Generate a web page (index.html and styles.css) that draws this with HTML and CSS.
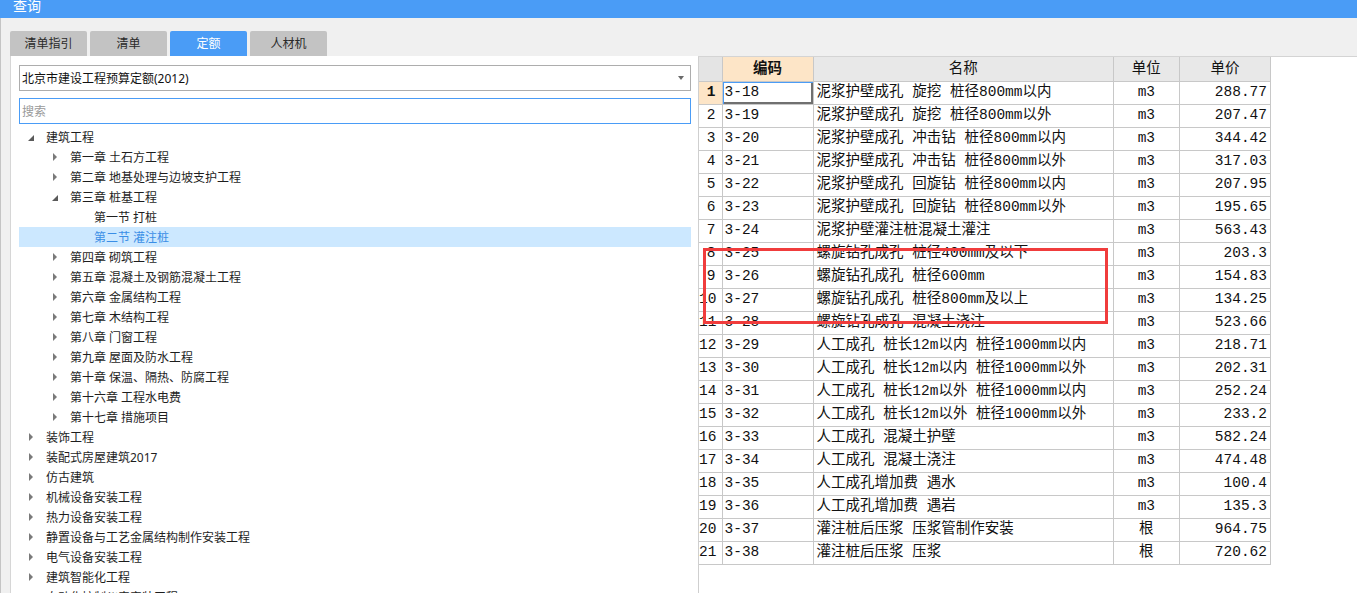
FILE: index.html
```html
<!DOCTYPE html>
<html lang="zh-CN">
<head>
<meta charset="utf-8">
<title>查询</title>
<link rel="stylesheet" href="styles.css">
</head>
<body>
<div class="app">
  <div class="titlebar"><span class="title">查询</span></div>
  <div class="frame">
    <div class="tabs">
      <div class="tab">清单指引</div>
      <div class="tab">清单</div>
      <div class="tab active">定额</div>
      <div class="tab">人材机</div>
    </div>
    <div class="main">
      <div class="left">
        <div class="combo"><span>北京市建设工程预算定额(2012)</span><i class="combo-arrow"></i></div>
        <input class="search" type="text" placeholder="搜索">
        <ul class="tree">
          <li class="node l0"><i class="tw open"></i><span>建筑工程</span></li>
          <li class="node l1"><i class="tw closed"></i><span>第一章 土石方工程</span></li>
          <li class="node l1"><i class="tw closed"></i><span>第二章 地基处理与边坡支护工程</span></li>
          <li class="node l1"><i class="tw open"></i><span>第三章 桩基工程</span></li>
          <li class="node l2"><i class="tw"></i><span>第一节 打桩</span></li>
          <li class="node l2 selected"><i class="tw"></i><span>第二节 灌注桩</span></li>
          <li class="node l1"><i class="tw closed"></i><span>第四章 砌筑工程</span></li>
          <li class="node l1"><i class="tw closed"></i><span>第五章 混凝土及钢筋混凝土工程</span></li>
          <li class="node l1"><i class="tw closed"></i><span>第六章 金属结构工程</span></li>
          <li class="node l1"><i class="tw closed"></i><span>第七章 木结构工程</span></li>
          <li class="node l1"><i class="tw closed"></i><span>第八章 门窗工程</span></li>
          <li class="node l1"><i class="tw closed"></i><span>第九章 屋面及防水工程</span></li>
          <li class="node l1"><i class="tw closed"></i><span>第十章 保温、隔热、防腐工程</span></li>
          <li class="node l1"><i class="tw closed"></i><span>第十六章 工程水电费</span></li>
          <li class="node l1"><i class="tw closed"></i><span>第十七章 措施项目</span></li>
          <li class="node l0"><i class="tw closed"></i><span>装饰工程</span></li>
          <li class="node l0"><i class="tw closed"></i><span>装配式房屋建筑2017</span></li>
          <li class="node l0"><i class="tw closed"></i><span>仿古建筑</span></li>
          <li class="node l0"><i class="tw closed"></i><span>机械设备安装工程</span></li>
          <li class="node l0"><i class="tw closed"></i><span>热力设备安装工程</span></li>
          <li class="node l0"><i class="tw closed"></i><span>静置设备与工艺金属结构制作安装工程</span></li>
          <li class="node l0"><i class="tw closed"></i><span>电气设备安装工程</span></li>
          <li class="node l0"><i class="tw closed"></i><span>建筑智能化工程</span></li>
          <li class="node l0"><i class="tw closed"></i><span>自动化控制仪表安装工程</span></li>
        </ul>
      </div>
      <div class="right">
        <table class="grid">
          <colgroup>
            <col class="c-no"><col class="c-code"><col class="c-name"><col class="c-unit"><col class="c-price">
          </colgroup>
          <thead>
            <tr class="head"><th class="corner"></th><th class="hl">编码</th><th>名称</th><th>单位</th><th>单价</th></tr>
          </thead>
          <tbody>
            <tr><td class="no cur">1</td><td class="code focus">3-18</td><td class="name">泥浆护壁成孔 旋挖 桩径800mm以内</td><td class="unit">m3</td><td class="price">288.77</td></tr>
            <tr><td class="no">2</td><td class="code">3-19</td><td class="name">泥浆护壁成孔 旋挖 桩径800mm以外</td><td class="unit">m3</td><td class="price">207.47</td></tr>
            <tr><td class="no">3</td><td class="code">3-20</td><td class="name">泥浆护壁成孔 冲击钻 桩径800mm以内</td><td class="unit">m3</td><td class="price">344.42</td></tr>
            <tr><td class="no">4</td><td class="code">3-21</td><td class="name">泥浆护壁成孔 冲击钻 桩径800mm以外</td><td class="unit">m3</td><td class="price">317.03</td></tr>
            <tr><td class="no">5</td><td class="code">3-22</td><td class="name">泥浆护壁成孔 回旋钻 桩径800mm以内</td><td class="unit">m3</td><td class="price">207.95</td></tr>
            <tr><td class="no">6</td><td class="code">3-23</td><td class="name">泥浆护壁成孔 回旋钻 桩径800mm以外</td><td class="unit">m3</td><td class="price">195.65</td></tr>
            <tr><td class="no">7</td><td class="code">3-24</td><td class="name">泥浆护壁灌注桩混凝土灌注</td><td class="unit">m3</td><td class="price">563.43</td></tr>
            <tr><td class="no">8</td><td class="code">3-25</td><td class="name">螺旋钻孔成孔 桩径400mm及以下</td><td class="unit">m3</td><td class="price">203.3</td></tr>
            <tr><td class="no">9</td><td class="code">3-26</td><td class="name">螺旋钻孔成孔 桩径600mm</td><td class="unit">m3</td><td class="price">154.83</td></tr>
            <tr><td class="no">10</td><td class="code">3-27</td><td class="name">螺旋钻孔成孔 桩径800mm及以上</td><td class="unit">m3</td><td class="price">134.25</td></tr>
            <tr><td class="no">11</td><td class="code">3-28</td><td class="name">螺旋钻孔成孔 混凝土浇注</td><td class="unit">m3</td><td class="price">523.66</td></tr>
            <tr><td class="no">12</td><td class="code">3-29</td><td class="name">人工成孔 桩长12m以内 桩径1000mm以内</td><td class="unit">m3</td><td class="price">218.71</td></tr>
            <tr><td class="no">13</td><td class="code">3-30</td><td class="name">人工成孔 桩长12m以内 桩径1000mm以外</td><td class="unit">m3</td><td class="price">202.31</td></tr>
            <tr><td class="no">14</td><td class="code">3-31</td><td class="name">人工成孔 桩长12m以外 桩径1000mm以内</td><td class="unit">m3</td><td class="price">252.24</td></tr>
            <tr><td class="no">15</td><td class="code">3-32</td><td class="name">人工成孔 桩长12m以外 桩径1000mm以外</td><td class="unit">m3</td><td class="price">233.2</td></tr>
            <tr><td class="no">16</td><td class="code">3-33</td><td class="name">人工成孔 混凝土护壁</td><td class="unit">m3</td><td class="price">582.24</td></tr>
            <tr><td class="no">17</td><td class="code">3-34</td><td class="name">人工成孔 混凝土浇注</td><td class="unit">m3</td><td class="price">474.48</td></tr>
            <tr><td class="no">18</td><td class="code">3-35</td><td class="name">人工成孔增加费 遇水</td><td class="unit">m3</td><td class="price">100.4</td></tr>
            <tr><td class="no">19</td><td class="code">3-36</td><td class="name">人工成孔增加费 遇岩</td><td class="unit">m3</td><td class="price">135.3</td></tr>
            <tr><td class="no">20</td><td class="code">3-37</td><td class="name">灌注桩后压浆 压浆管制作安装</td><td class="unit">根</td><td class="price">964.75</td></tr>
            <tr><td class="no">21</td><td class="code">3-38</td><td class="name">灌注桩后压浆 压浆</td><td class="unit">根</td><td class="price">720.62</td></tr>
          </tbody>
        </table>
        <div class="mark"></div>
      </div>
    </div>
  </div>
</div>
</body>
</html>
```
FILE: styles.css
```css
* { box-sizing: border-box; }
html, body { margin: 0; padding: 0; }
body {
  width: 1357px;
  height: 593px;
  overflow: hidden;
  background: #f0f0f0;
  font-family: "Noto Sans", "Noto Sans CJK SC", sans-serif;
  color: #1e1e1e;
}
.app { display: flex; flex-direction: column; height: 593px; }

.titlebar {
  height: 18px;
  background: #4a9cf6;
  padding-left: 13px;
  overflow: hidden;
}
.title {
  display: block;
  color: #fff;
  font-size: 14px;
  line-height: 12px;
}

.frame {
  flex: 1;
  display: flex;
  flex-direction: column;
  border-left: 1px solid #c4c4c4;
  min-height: 0;
}

.tabs {
  display: flex;
  gap: 3px;
  padding: 13px 0 0 9px;
  height: 38px;
}
.tab {
  width: 77px;
  height: 25px;
  background: #c3c3c3;
  border-radius: 2px 2px 0 0;
  font-size: 12px;
  line-height: 25px;
  text-align: center;
  color: #2a2a2a;
}
.tab.active { background: #4a9cf6; color: #fff; }

.main {
  flex: 1;
  display: flex;
  margin-left: 9px;
  min-height: 0;
}

.left {
  width: 688px;
  background: #fff;
  border-left: 1px solid #d6d6d6;
  padding: 9px 7px 0 8px;
  overflow: hidden;
}
.combo {
  height: 26px;
  border: 1px solid #adadad;
  display: flex;
  align-items: center;
  justify-content: space-between;
  padding: 0 6px 0 2px;
  font-size: 12px;
  color: #111;
}
.combo-arrow {
  width: 0; height: 0;
  border-left: 3.5px solid transparent;
  border-right: 3.5px solid transparent;
  border-top: 4px solid #6a6a6a;
}
.search {
  display: block;
  width: 100%;
  height: 26px;
  margin: 7px 0 0;
  border: 1px solid #4a9cf6;
  outline: none;
  padding: 0 2px;
  font-family: "Noto Sans", "Noto Sans CJK SC", sans-serif;
  font-size: 12px;
  color: #222;
  background: #fff;
}
.search::placeholder { color: #9a9a9a; }

.tree {
  list-style: none;
  margin: 3px 0 0;
  padding: 0;
}
.node {
  height: 20px;
  display: flex;
  align-items: center;
  font-size: 12px;
  color: #1e1e1e;
  white-space: nowrap;
}
.node.l0 { padding-left: 9px; }
.node.l1 { padding-left: 33px; }
.node.l2 { padding-left: 57px; }
.node.selected { background: #cce8ff; color: #3a8ee6; }
.tw {
  width: 18px;
  height: 20px;
  flex: none;
  position: relative;
}
.tw.closed::before {
  content: "";
  position: absolute;
  left: 1px; top: 6px;
  border-left: 4px solid #7a7a7a;
  border-top: 4px solid transparent;
  border-bottom: 4px solid transparent;
}
.tw.open::before {
  content: "";
  position: absolute;
  left: 0; top: 8px;
  border-bottom: 6px solid #5a5a5a;
  border-left: 6px solid transparent;
}

.right {
  flex: 1;
  position: relative;
  background: #fff;
  border-left: 1px solid #cfcfcf;
  border-top: 1px solid #d4d4d4;
  overflow: hidden;
}
.grid {
  border-collapse: collapse;
  table-layout: fixed;
  width: 572px;
  font-family: "Liberation Mono", "Noto Sans CJK SC", monospace;
  font-size: 14.5px;
  color: #111;
}
.c-no { width: 23px; }
.c-code { width: 91px; }
.c-name { width: 300px; }
.c-unit { width: 66px; }
.c-price { width: 91px; }
.grid tr { height: 23px; }
.grid tr.head { height: 24px; }
.grid th, .grid td {
  border: 1px solid #c8c8c8;
  padding: 0;
  white-space: nowrap;
  overflow: hidden;
  line-height: 21px;
}
.grid th {
  background: #e8e8e8;
  font-weight: normal;
  text-align: center;
  border-top: none;
  padding-top: 1px;
}
.grid th:first-child, .grid td:first-child { border-left: none; }
.grid th.corner { background: #e4e4e4; }
.grid th.hl { background: #fde5c7; font-weight: bold; }
.no { text-align: right; padding-right: 6px !important; text-overflow: clip; }
.no.cur { background: #fde5c7; font-weight: bold; }
.code { padding-left: 2px !important; }
.code.focus { box-shadow: inset 1px 1px 0 #4a9cf6, inset -2px -2px 0 #707070; }
.name { padding-left: 3px !important; }
.unit { text-align: center; }
.price { text-align: right; padding-right: 3px !important; }

.mark {
  position: absolute;
  left: 4px;
  top: 191px;
  width: 405px;
  height: 76px;
  border: 3px solid #f03c3c;
  pointer-events: none;
}
```
